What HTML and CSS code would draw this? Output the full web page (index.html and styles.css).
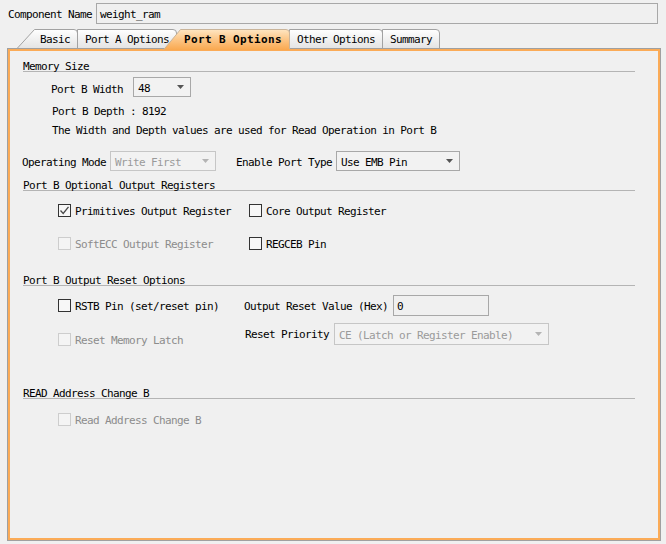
FILE: index.html
```html
<!DOCTYPE html>
<html>
<head>
<meta charset="utf-8">
<link rel="stylesheet" href="styles.css">
</head>
<body>
<div class="name-row">
  <span class="lbl name-label">Component Name</span>
  <div class="field name-field">weight_ram</div>
</div>

<div class="tabs">
  <div class="tab tab-basic">
    <svg class="tab-bg" width="61" height="19" viewBox="0 0 61 19"><defs><linearGradient id="g1" x1="0" y1="0" x2="0" y2="1"><stop offset="0" stop-color="#ffffff"/><stop offset="1" stop-color="#e4e4e4"/></linearGradient></defs><path d="M0.5 19 L17.5 0.5 L57 0.5 Q60.5 0.5 60.5 4 L60.5 19" fill="url(#g1)" stroke="#a2a2a2"/></svg>
    <span class="tab-text">Basic</span>
  </div>
  <div class="tab tab-a">
    <svg class="tab-bg" width="100" height="19" viewBox="0 0 100 19"><defs><linearGradient id="g2" x1="0" y1="0" x2="0" y2="1"><stop offset="0" stop-color="#ffffff"/><stop offset="1" stop-color="#e4e4e4"/></linearGradient></defs><path d="M0.5 19 L0.5 0.5 L96 0.5 Q99.5 0.5 99.5 4 L99.5 19" fill="url(#g2)" stroke="#a2a2a2"/></svg>
    <span class="tab-text">Port A Options</span>
  </div>
  <div class="tab tab-b">
    <svg class="tab-bg" width="127" height="21" viewBox="0 0 127 21"><defs><linearGradient id="g3" x1="0" y1="0" x2="0" y2="1"><stop offset="0" stop-color="#ffe6c2"/><stop offset="0.5" stop-color="#fcc585"/><stop offset="1" stop-color="#f9a84f"/></linearGradient></defs><path d="M0 21 L17.5 0.5 L123 0.5 Q126.5 0.5 126.5 4 L126.5 21 Z" fill="url(#g3)" stroke="none"/><path d="M0.5 21 L17.5 0.5 L123 0.5 Q126.5 0.5 126.5 4 L126.5 20" fill="none" stroke="#c9b49a"/></svg>
    <span class="tab-text">Port B Options</span>
  </div>
  <div class="tab tab-other">
    <svg class="tab-bg" width="94" height="19" viewBox="0 0 94 19"><defs><linearGradient id="g4" x1="0" y1="0" x2="0" y2="1"><stop offset="0" stop-color="#ffffff"/><stop offset="1" stop-color="#e4e4e4"/></linearGradient></defs><path d="M0.5 19 L0.5 0.5 L90 0.5 Q93.5 0.5 93.5 4 L93.5 19" fill="url(#g4)" stroke="#a2a2a2"/></svg>
    <span class="tab-text">Other Options</span>
  </div>
  <div class="tab tab-sum">
    <svg class="tab-bg" width="58" height="19" viewBox="0 0 58 19"><defs><linearGradient id="g5" x1="0" y1="0" x2="0" y2="1"><stop offset="0" stop-color="#ffffff"/><stop offset="1" stop-color="#e4e4e4"/></linearGradient></defs><path d="M0.5 19 L0.5 0.5 L54 0.5 Q57.5 0.5 57.5 4 L57.5 19" fill="url(#g5)" stroke="#a2a2a2"/></svg>
    <span class="tab-text">Summary</span>
  </div>
</div>

<div class="panel">
  <div class="section sec-mem">Memory Size</div>

  <div class="row row-width">
    <span class="lbl w-width">Port B Width</span>
    <div class="combo combo-width">
      <span class="t">48</span>
      <svg class="arrow" width="7" height="4" viewBox="0 0 7 4"><path d="M0 0 H7 L3.5 4 Z" fill="#555"/></svg>
    </div>
  </div>
  <div class="text-line tl-depth">Port B Depth : 8192</div>
  <div class="text-line tl-note">The Width and Depth values are used for Read Operation in Port B</div>

  <div class="row row-mode">
    <span class="lbl w-mode">Operating Mode</span>
    <div class="combo combo-mode disabled">
      <span class="t">Write First</span>
      <svg class="arrow" width="7" height="4" viewBox="0 0 7 4"><path d="M0 0 H7 L3.5 4 Z" fill="#b4b4b4"/></svg>
    </div>
    <span class="lbl w-enable">Enable Port Type</span>
    <div class="combo combo-enable">
      <span class="t">Use EMB Pin</span>
      <svg class="arrow" width="7" height="4" viewBox="0 0 7 4"><path d="M0 0 H7 L3.5 4 Z" fill="#555"/></svg>
    </div>
  </div>

  <div class="section sec-opt">Port B Optional Output Registers</div>

  <div class="row cb-row cb-row1">
    <label class="cb cb-col1"><span class="box"><svg width="11" height="11" viewBox="0 0 11 11"><path d="M1.5 5.5 L4.2 8.5 L9.5 1.8" fill="none" stroke="#4a4a4a" stroke-width="1.3"/></svg></span><span class="t">Primitives Output Register</span></label>
    <label class="cb"><span class="box"></span><span class="t">Core Output Register</span></label>
  </div>
  <div class="row cb-row cb-row2">
    <label class="cb cb-col1 disabled"><span class="box"></span><span class="t">SoftECC Output Register</span></label>
    <label class="cb"><span class="box"></span><span class="t">REGCEB Pin</span></label>
  </div>

  <div class="section sec-reset">Port B Output Reset Options</div>

  <div class="row reset-row1">
    <label class="cb reset-col1"><span class="box"></span><span class="t">RSTB Pin (set/reset pin)</span></label>
    <span class="lbl w-resetval">Output Reset Value (Hex)</span>
    <div class="field reset-field">0</div>
  </div>
  <div class="row reset-row2">
    <label class="cb reset-col1 disabled latch"><span class="box"></span><span class="t">Reset Memory Latch</span></label>
    <span class="lbl w-prio">Reset Priority</span>
    <div class="combo combo-prio disabled">
      <span class="t">CE (Latch or Register Enable)</span>
      <svg class="arrow" width="7" height="4" viewBox="0 0 7 4"><path d="M0 0 H7 L3.5 4 Z" fill="#b4b4b4"/></svg>
    </div>
  </div>

  <div class="section sec-read">READ Address Change B</div>

  <div class="row cb-row cb-row-read">
    <label class="cb disabled"><span class="box"></span><span class="t">Read Address Change B</span></label>
  </div>
</div>
</body>
</html>
```

FILE: styles.css
```css
* { box-sizing: border-box; }

html, body {
  margin: 0;
  padding: 0;
  background: #f0f0f0;
}

body {
  width: 666px;
  height: 544px;
  overflow: hidden;
  font-family: "DejaVu Sans Mono", "Liberation Mono", monospace;
  font-size: 11px;
  letter-spacing: -0.62px;
  color: #000;
  padding-top: 3px;
}

/* top name row */
.name-row {
  display: flex;
  align-items: center;
  height: 21px;
  padding-left: 8px;
}
.name-label {
  width: 88px;
}
.lbl {
  white-space: nowrap;
  padding-top: 2px;
}
.t {
  padding-top: 2px;
}
.field {
  border: 1px solid #a8a8a8;
  background: #f0f0f0;
  height: 21px;
  line-height: 21px;
  padding-left: 3px;
  white-space: nowrap;
}
.name-field {
  width: 562px;
}

/* tabs */
.tabs {
  display: flex;
  align-items: flex-end;
  height: 19px;
  margin-top: 5px;
  padding-left: 17px;
  position: relative;
  z-index: 2;
}
.tab {
  position: relative;
  height: 19px;
  line-height: 20px;
  padding-top: 1px;
  white-space: nowrap;
}
.tab-bg {
  position: absolute;
  left: 0;
  top: 0;
}
.tab-text {
  position: relative;
}
.tab-basic { width: 61px; padding-left: 23px; }
.tab-a { width: 100px; margin-left: -1px; padding-left: 8px; }
.tab-b {
  width: 127px;
  height: 21px;
  margin-left: -14px;
  margin-bottom: -2px;
  padding-left: 21px;
  line-height: 20px;
  font-weight: bold;
  letter-spacing: 0.38px;
  z-index: 3;
}
.tab-other { width: 94px; margin-left: -1px; padding-left: 8px; }
.tab-sum { width: 58px; margin-left: -1px; padding-left: 8px; }

/* panel */
.panel {
  margin-left: 7px;
  width: 654px;
  height: 493px;
  border: 1px solid #a0a0a0;
  box-shadow: inset 0 0 0 2px #fbab57;
  position: relative;
  z-index: 1;
  display: flex;
  flex-direction: column;
  align-items: flex-start;
}

.section {
  width: 612px;
  margin-left: 15px;
  height: 13px;
  line-height: 16px;
  border-bottom: 1px solid #b4b4b4;
  white-space: nowrap;
}
.sec-mem { margin-top: 10px; }
.sec-opt { margin-top: 7px; }
.sec-reset { margin-top: 23px; }
.sec-read { margin-top: 41px; }

.row {
  display: flex;
  align-items: center;
  white-space: nowrap;
}

.row-width { margin-top: 5px; margin-left: 43px; height: 20px; }
.w-width { width: 82px; padding-top: 4px; }

.text-line {
  margin-left: 44px;
  height: 14px;
  line-height: 16px;
  white-space: nowrap;
}
.tl-depth { margin-top: 7px; }
.tl-note { margin-top: 5px; }

.row-mode { margin-top: 14px; margin-left: 14px; height: 20px; }
.w-mode { width: 88px; }
.w-enable { width: 100px; margin-left: 20px; }

.combo {
  display: flex;
  align-items: center;
  justify-content: space-between;
  height: 20px;
  border: 1px solid #a8a8a8;
  background: #f2f2f2;
  padding-left: 4px;
  padding-right: 6px;
}
.combo.disabled {
  border-color: #c6c6c6;
  color: #9a9a9a;
}
.combo-width { width: 58px; }
.combo-mode { width: 106px; }
.combo-enable { width: 124px; }
.combo-prio { width: 215px; height: 22px; }

/* checkboxes */
.cb {
  display: flex;
  align-items: center;
  white-space: nowrap;
  height: 13px;
}
.box {
  width: 13px;
  height: 13px;
  border: 1px solid #333;
  background: #f7f7f7;
  margin-right: 4px;
  display: flex;
  align-items: center;
  justify-content: center;
  flex: none;
}
.cb.disabled { color: #8c8c8c; }
.cb.disabled .box { border-color: #cdcdcd; background: #f4f4f4; }

.cb-row { margin-left: 50px; height: 13px; }
.cb-col1 { width: 191px; }
.cb-row1 { margin-top: 13px; }
.cb-row2 { margin-top: 20px; }
.cb-row-read { margin-top: 14px; }

.reset-row1 { margin-top: 9px; margin-left: 50px; height: 21px; }
.reset-col1 { width: 186px; }
.w-resetval { width: 149px; }
.reset-field { width: 96px; }

.reset-row2 {
  margin-top: 7px;
  margin-left: 50px;
  height: 22px;
  align-items: flex-start;
}
.latch { margin-top: 10px; width: 187px; }
.w-prio { width: 89px; line-height: 22px; margin-top: -1px; }
```
